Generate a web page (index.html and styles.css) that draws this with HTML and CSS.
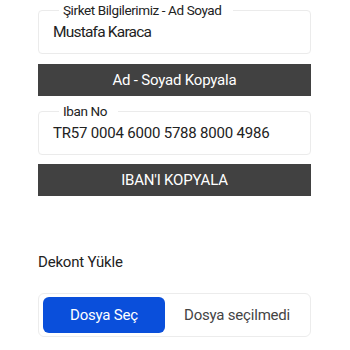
FILE: index.html
```html
<!DOCTYPE html>
<html lang="tr">
<head>
<meta charset="utf-8">
<link rel="stylesheet" href="styles.css">
</head>
<body>
<div class="page">
  <fieldset class="field">
    <legend class="legend">Şirket Bilgilerimiz - Ad Soyad</legend>
    <div class="value value-name">Mustafa Karaca</div>
  </fieldset>
  <button class="copy-btn">Ad - Soyad Kopyala</button>
  <fieldset class="field field-iban">
    <legend class="legend">Iban No</legend>
    <div class="value">TR57 0004 6000 5788 8000 4986</div>
  </fieldset>
  <button class="copy-btn copy-iban">IBAN'I KOPYALA</button>
  <div class="upload-label">Dekont Yükle</div>
  <div class="file-box">
    <span class="file-btn">Dosya Seç</span>
    <span class="file-name">Dosya seçilmedi</span>
  </div>
</div>
</body>
</html>
```
FILE: styles.css
```css
html, body {
  margin: 0;
  padding: 0;
  background: #ffffff;
}
.page {
  width: 273px;
  margin-left: 38px;
  padding-top: 1px;
  display: flex;
  flex-direction: column;
  font-family: Roboto, "Noto Sans", sans-serif;
  letter-spacing: -0.2px;
  color: #222222;
}
.field {
  margin: 0;
  padding: 2px 14px 10px 14px;
  border: 1px solid #ebebeb;
  border-radius: 4px;
  min-width: 0;
}
.legend {
  padding: 0 11px 0 4px;
  margin-left: 6px;
  font-size: 13.5px;
  letter-spacing: -0.4px;
  line-height: 18px;
  color: #222222;
}
.value {
  font-size: 15px;
  line-height: 22px;
  color: #222222;
  white-space: nowrap;
}
.value-name {
  font-size: 15.5px;
  letter-spacing: -0.8px;
}
.copy-btn {
  margin: 10px 0 0 0;
  height: 32px;
  border: none;
  border-radius: 0;
  background: #414141;
  color: #ffffff;
  font-family: Roboto, "Noto Sans", sans-serif;
  letter-spacing: -0.2px;
  font-size: 15px;
  padding: 0;
}
.field-iban {
  margin-top: 6px;
}
.copy-iban {
  margin-top: 9px;
}
.upload-label {
  margin-top: 57px;
  font-size: 15px;
  line-height: 18px;
  color: #222222;
}
.file-box {
  margin-top: 22px;
  height: 44px;
  box-sizing: border-box;
  border: 1px solid #ececec;
  border-radius: 6px;
  padding: 4px;
  display: flex;
  align-items: center;
  gap: 19px;
}
.file-btn {
  width: 122px;
  height: 36px;
  border-radius: 6px;
  background: #0a4fdb;
  color: #ffffff;
  font-size: 15px;
  display: flex;
  align-items: center;
  justify-content: center;
}
.file-name {
  font-size: 15px;
  color: #444444;
}
```
